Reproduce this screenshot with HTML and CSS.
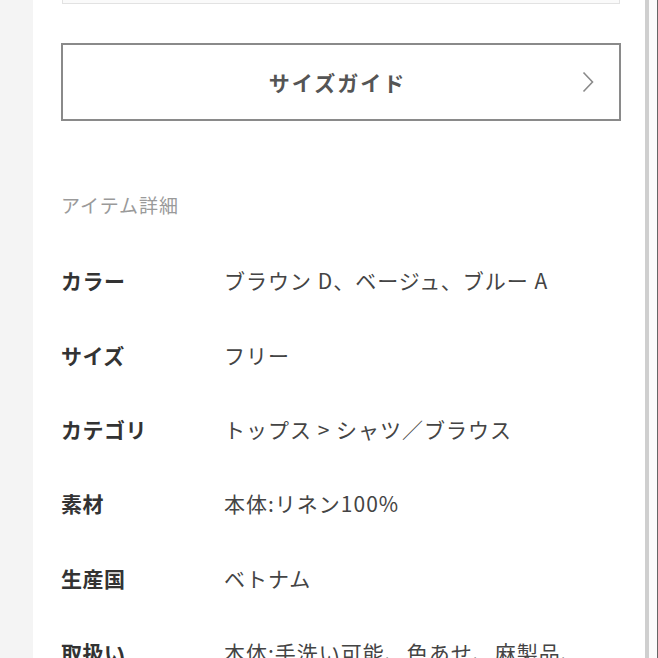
FILE: index.html
```html
<!DOCTYPE html>
<html lang="ja">
  <head>
    <meta charset="UTF-8">
    <title>アイテム詳細</title>
    <link rel="stylesheet" href="styles.css">
  </head>
  <body>
    <div id="page">
      <div id="gutter"></div>

      <div id="main">
        <!-- bottom of the block above -->
        <div class="prev-box"></div>

        <a class="guide-button" href="#">
          <span></span>
          <span class="guide-label">サイズガイド</span>
          <svg class="chevron" width="12" height="22" viewBox="0 0 12 22">
            <polyline points="1.5,1.5 10.5,11 1.5,20.5" fill="none" stroke="#8a8a8a" stroke-width="1.6" />
          </svg>
        </a>

        <div class="section-title">アイテム詳細</div>

        <!-- item detail table -->
        <div class="details">
          <div class="row"><div class="label">カラー</div><div class="value">ブラウン D、ベージュ、ブルー A</div></div>
          <div class="row"><div class="label">サイズ</div><div class="value">フリー</div></div>
          <div class="row"><div class="label">カテゴリ</div><div class="value">トップス &gt; シャツ／ブラウス</div></div>
          <div class="row"><div class="label">素材</div><div class="value">本体:リネン100%</div></div>
          <div class="row"><div class="label">生産国</div><div class="value">ベトナム</div></div>
          <div class="row"><div class="label">取扱い</div><div class="value">本体:手洗い可能、色あせ、麻製品、</div></div>
        </div>
      </div>

      <div id="edge">
        <div class="edge-bar"></div>
        <div class="edge-gap"></div>
        <div class="edge-line"></div>
      </div>
    </div>
  </body>
</html>
```

FILE: styles.css
```css
html, body {
  margin: 0;
  height: 100%;
  overflow: hidden;
}

body {
  font-family: "Noto Sans CJK JP", "Noto Sans", sans-serif;
  background-color: #fff;
  color: #333;
}

#page {
  display: flex;
  height: 658px;
}

#gutter {
  width: 33px;
  background-color: #f4f4f4;
}

#main {
  flex: 1;
  padding: 0 24px 0 28px;
  background-color: #fff;
}

.prev-box {
  height: 3px;
  margin: 0 1px 0 1px;
  background-color: #fafafa;
  border: 1px solid #e2e2e2;
  border-top: none;
}

.guide-button {
  display: grid;
  grid-template-columns: 1fr auto 1fr;
  align-items: center;
  height: 74px;
  margin-top: 39px;
  padding: 0 25px 0 0;
  border: 2px solid #8a8a8a;
  text-decoration: none;
}

.guide-label {
  font-size: 21px;
  font-weight: bold;
  color: #555;
  letter-spacing: 2px;
  padding-left: 18px;
}

.chevron {
  justify-self: end;
}

.section-title {
  margin-top: 70px;
  font-size: 19px;
  line-height: 28px;
  letter-spacing: 1px;
  color: #9a9a9a;
}

.details {
  margin-top: 24px;
}

.row {
  display: grid;
  grid-template-columns: 163px 1fr;
  align-items: center;
  height: 74.4px;
}

.label {
  font-size: 21px;
  font-weight: bold;
  letter-spacing: 0.5px;
  color: #333;
}

.value {
  font-size: 21px;
  letter-spacing: 1px;
  color: #444;
  white-space: nowrap;
}

#edge {
  display: flex;
  width: 13px;
}

.edge-bar {
  width: 4px;
  background-color: #cfcfcf;
}

.edge-gap {
  width: 8px;
  background-color: #fbfbfb;
}

.edge-line {
  width: 1px;
  background-color: #666;
}
```
